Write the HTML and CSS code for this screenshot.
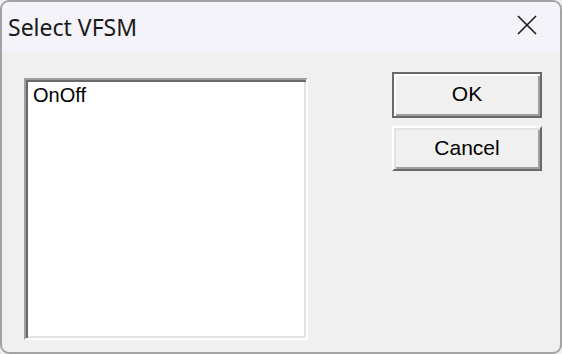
FILE: index.html
```html
<!DOCTYPE html>
<html lang="en">
<head>
    <meta charset="UTF-8">
    <title>Select VFSM</title>
    <link rel="stylesheet" href="styles.css">
</head>
<body>
    <!-- Dialog window -->
    <div class="window">
        <!-- Title bar -->
        <div class="title-bar">
            <span class="title">Select VFSM</span>
            <svg class="close" width="20" height="20" viewBox="0 0 20 20">
                <path d="M1 1 L19 19 M19 1 L1 19" stroke="#1a1a1a" stroke-width="1.6" fill="none"/>
            </svg>
        </div>
        <!-- Dialog body -->
        <div class="dialog-body">
            <div class="listbox">
                <div class="list-item">OnOff</div>
            </div>
            <div class="buttons">
                <button class="btn default">OK</button>
                <button class="btn">Cancel</button>
            </div>
        </div>
    </div>
</body>
</html>
```

FILE: styles.css
```css
/* Reset */
* {
    margin: 0;
    padding: 0;
    box-sizing: border-box;
}

body {
    width: 562px;
    height: 354px;
    overflow: hidden;
    background: #f0f0f0;
}

/* Window frame */
.window {
    width: 562px;
    height: 354px;
    border: 2px solid #a3a3a3;
    border-radius: 9px;
    background: #f0f0f0;
    overflow: hidden;
    display: flex;
    flex-direction: column;
}

/* Title bar */
.title-bar {
    height: 50px;
    background: #f3f3f9;
    display: flex;
    align-items: center;
    justify-content: space-between;
    padding: 0 23px 0 6px;
}

.title {
    font-family: "Noto Sans", "Open Sans", sans-serif;
    font-size: 23px;
    color: #1a1a1a;
}

.close {
    margin-bottom: 5px;
}

/* Dialog body */
.dialog-body {
    flex: 1;
    display: flex;
    padding: 20px 18px 0 22px;
}

.listbox {
    width: 284px;
    height: 262px;
    margin-top: 6px;
    background: #fff;
    border: 2px solid;
    border-color: #a0a0a0 #fff #fff #a0a0a0;
    box-shadow: inset 2px 2px #696969, inset -2px -2px #e3e3e3;
    padding: 3px 7px;
}

.list-item {
    font-family: "Liberation Sans", Arial, sans-serif;
    font-size: 20px;
    line-height: 24px;
    color: #000;
}

/* Buttons */
.buttons {
    margin-left: auto;
    display: flex;
    flex-direction: column;
    gap: 8px;
}

.btn {
    width: 150px;
    height: 45px;
    padding-bottom: 2px;
    font-family: "Liberation Sans", Arial, sans-serif;
    font-size: 21px;
    color: #000;
    background: #f0f0f0;
    border: 2px solid;
    border-color: #fff #696969 #696969 #fff;
    box-shadow: inset 2px 2px #e3e3e3, inset -2px -2px #a0a0a0;
}

.btn.default {
    height: 46px;
    border-color: #696969;
    box-shadow: inset 2px 2px #fff, inset -2px -2px #a0a0a0;
}
```
